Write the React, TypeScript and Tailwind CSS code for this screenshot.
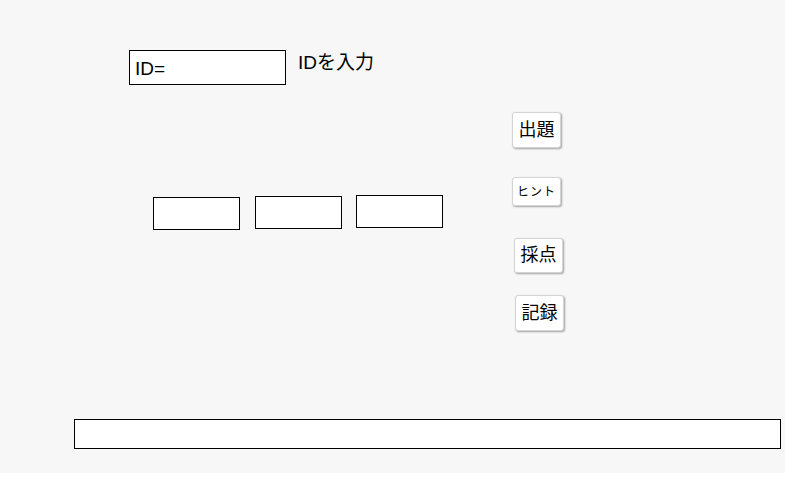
const Button = ({ label, className }: { label: string; className: string }) => (
    <button
        className={`rounded-[3px] border border-[#d4d4d4] bg-white shadow-[1px_1px_2px_rgba(0,0,0,0.35)] text-black ${className}`}
    >
        {label}
    </button>
);

const App = () => {
    return (
        <div className="bg-white w-[794px] h-[490px]">
            <div className="w-[785px] h-[473px] bg-[#f7f7f7] pt-[50px] font-['Liberation_Sans','Noto_Sans_CJK_JP',sans-serif]">
                <div className="flex items-start pl-[129px]">
                    <div className="w-[157px] h-[35px] border border-black bg-white pl-[5px] pt-[7px] text-[19px] leading-[22px]">
                        ID=
                    </div>
                    <span className="ml-[12px] mt-[1px] text-[19px] leading-[24px] text-black">
                        IDを入力
                    </span>
                </div>

                <div className="flex mt-[27px]">
                    <div className="w-[512px] flex items-start pl-[153px]">
                        <div className="mt-[85px] w-[87px] h-[33px] border border-black bg-white" />
                        <div className="mt-[84px] ml-[15px] w-[87px] h-[33px] border border-black bg-white" />
                        <div className="mt-[83px] ml-[14px] w-[87px] h-[33px] border border-black bg-white" />
                    </div>
                    <div className="flex flex-col items-start">
                        <Button label="出題" className="w-[49px] h-[36px] text-[18px]" />
                        <Button label="ヒント" className="mt-[29px] w-[49px] h-[29px] text-[12px] tracking-[1px]" />
                        <Button label="採点" className="mt-[32px] ml-[2px] w-[49px] h-[35px] text-[18px]" />
                        <Button label="記録" className="mt-[22px] ml-[3px] w-[49px] h-[36px] text-[18px]" />
                    </div>
                </div>

                <div className="mt-[88px] ml-[74px] w-[707px] h-[30px] border border-black bg-white" />
            </div>
        </div>
    );
};

export default App;
